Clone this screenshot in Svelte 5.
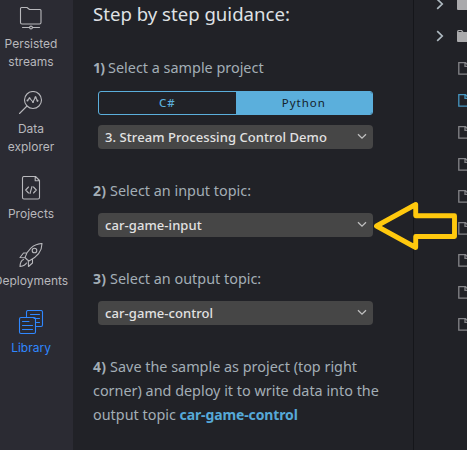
<script>
  const nav = [
    { icon: 'folder', lines: ['Persisted', 'streams'] },
    { icon: 'explore', lines: ['Data', 'explorer'] },
    { icon: 'code', lines: ['Projects'] },
    { icon: 'rocket', lines: ['Deployments'] },
    { icon: 'library', lines: ['Library'], active: true },
  ];
  const files = ['folder', 'folder', 'file', 'active', 'file', 'file', 'file', 'file', 'file', 'file', 'file'];
</script>

{#snippet select(value)}
  <div class="select">
    <span>{value}</span>
    <svg width="10" height="7" viewBox="0 0 10 7"><path d="M1 1.200 5 5.200 9 1.200" /></svg>
  </div>
{/snippet}

<div class="app">
  <nav>
    {#each nav as item}
      <div class="item" class:active={item.active}>
        <svg width="26" height="25" viewBox={item.icon === 'folder' ? '0 0 26 25' : item.icon === 'explore' ? '0 .5 26 25' : '0 1 26 25'}>
          {#if item.icon === 'folder'}
            <path d="M2.500 16.500V2.500q0-1 1-1H9l2.500 2H22q1 0 1 1v12q0 1.500-1.500 1.500H4q-1.500 0-1.500-1.500zM4.500 21.500h7M14.500 21.500h7" />
            <circle cx="13" cy="21.500" r="1.400" />
          {:else if item.icon === 'explore'}
            <circle cx="15" cy="9.500" r="8.500" /><path d="M9 15.500 1.500 23" />
            <path d="m9.500 10 2-2.500 3.500 4 2.500-5 2 4" /><path class="dots" d="M9.500 10h.01M11.500 7.700h.01M15 11.400h.01M17.500 6.700h.01M19.500 10.300h.01" />
          {:else if item.icon === 'code'}
            <path d="M17.500 1.500H6q-1.500 0-1.500 1.500v19.500q0 1.500 1.500 1.500h14q1.500 0 1.500-1.500V5.500zM17.200 1.700v4h4" />
            <path d="m10.500 12-2.800 3 2.800 3M15.500 12l2.800 3-2.800 3M14 11.500l-2 7" />
          {:else if item.icon === 'rocket'}
            <path d="M9 17.500c-1-1-2-2-2-2C9 8.500 15 2 24 1.500c0 8-6 14-13 17.500zM8.500 11H5.500L2 15.500l5 .2M14.500 17v4L10.500 24.500l-.2-5.500M5.500 17.500c-2 .8-3.300 3.500-3.500 7 3-.5 5.500-1.500 6.500-3.500" />
            <circle cx="16.500" cy="8.500" r="2.300" />
          {:else}
            <path d="M8.500 8V3q0-1.500 1.500-1.500h13Q24.500 1.500 24.500 3v13q0 1.500-1.500 1.500h-5.500M12.500 5.500h9M16 9.500h5.500M18.500 13.500h3" />
            <rect x="1.500" y="8.500" width="16" height="16" rx="1.500" /><path d="M4.500 12.500H11M4.500 16.500H14.500M4.500 20.500H14.500" />
          {/if}
        </svg>
        <div class="label">{#each item.lines as line}<span>{line}</span>{/each}</div>
      </div>
    {/each}
  </nav>

  <main>
    <h1>Step by step guidance:</h1>
    <section class="first">
      <p><b>1)</b> Select a sample project</p>
      <div class="tabs"><span class="cs">C#</span><span class="py">Python</span></div>
      {@render select('3. Stream Processing Control Demo')}
    </section>
    <section>
      <p><b>2)</b> Select an input topic:</p>
      {@render select('car-game-input')}
    </section>
    <section>
      <p><b>3)</b> Select an output topic:</p>
      {@render select('car-game-control')}
    </section>
    <p class="save"><b>4)</b> Save the sample as project (top right<br />corner) and deploy it to write data into the<br />output topic <strong>car-game-control</strong></p>
  </main>

  <aside>
    {#each files as kind}
      <div class="row" class:current={kind === 'active'}>
        {#if kind === 'folder'}
          <svg class="chevron" width="8" height="12" viewBox="0 0 8 12"><path d="M1.200 1.200 6.200 6 1.200 10.800" /></svg>
          <svg class="dir" width="14" height="12" viewBox="0 0 14 12"><path d="M0 2q0-2 1.500-2H5l1.500 2H14v10H1q-1 0-1-1z" /><path class="slot" d="M1.500 1.500H4.500" /></svg>
        {:else}
          <svg class="file" width="12" height="13" viewBox="0 0 12 13"><path d="M.800 .700h6.700l3.500 3.500v8H.800zM7 .800v3.500h4" /></svg>
        {/if}
      </div>
    {/each}
  </aside>

  <svg class="pointer" width="86" height="52" viewBox="0 0 86 52"><path d="M4.500 26 43.700 4.500v11.200H82.500v20.800H43.700V47.500z" /></svg>
</div>

<style>
  :global(body) { background: #212227; }
  .app { position: relative; display: flex; width: 467px; height: 450px; overflow: hidden; background: #212227; color: #a3aeb6; font-family: 'Noto Sans', sans-serif; }
  svg { flex: none; fill: none; stroke: currentColor; }
  nav { box-sizing: border-box; flex: 0 0 73px; padding-top: 6px; display: flex; flex-direction: column; gap: 20px; background: #2b2b33; color: #b8b8bc; }
  .item { width: 62px; display: flex; flex-direction: column; align-items: center; gap: 4px; }
  .item svg { stroke-width: 1.1; stroke-linejoin: round; stroke-linecap: round; }
  .item .dots { stroke-width: 2; }
  .label { display: flex; flex-direction: column; align-items: center; font: 12px/18px Inter, sans-serif; }
  .active { color: #2f87ff; }
  main { box-sizing: border-box; flex: 0 0 340px; padding: 0 0 0 20px; white-space: nowrap; }
  h1 { margin: 0; padding-top: 1px; height: 54px; box-sizing: border-box; font-size: 18.6px; line-height: 26px; font-weight: 400; color: #dfe1e4; }
  p { margin: 0; font-size: 14.4px; line-height: 24px; }
  b { font-size: 14px; font-weight: 700; letter-spacing: .3px; }
  section { height: 88px; }
  .first { height: 125px; padding-top: 2px; box-sizing: border-box; }
  section p { margin-bottom: 10px; }
  .first p { margin-bottom: 11px; }
  .first b { letter-spacing: -.7px; }
  .select { box-sizing: border-box; display: flex; align-items: center; justify-content: space-between; width: 275px; height: 24px; margin-left: 5px; padding: 0 6px 1px 7px; border-radius: 4px; background: #464646; color: #e2e2e2; font-size: 13px; font-weight: 500; letter-spacing: .07px; }
  .select svg { stroke: #c0c0c0; stroke-width: 1.3; }
  .tabs { box-sizing: border-box; display: flex; width: 275px; height: 24px; margin: 0 0 10px 5px; border: 1px solid #5bafdc; border-radius: 3px; overflow: hidden; font-size: 11.5px; line-height: 22px; letter-spacing: 1px; text-align: center; font-weight: 400; }
  .cs { flex: 1; color: #5bafdc; font-weight: 500; }
  .py { flex: 1; background: #5bafdc; color: #14222b; }
  strong { font-weight: 700; font-size: 14px; letter-spacing: -.12px; color: #56a9d8; }
  aside { box-sizing: border-box; flex: 1; border-left: 1px solid #15161a; margin-top: -12px; color: #858589; overflow: hidden; }
  .row { display: flex; align-items: center; height: 32px; padding-left: 44px; }
  .row:has(.chevron) { padding-left: 22px; gap: 13px; }
  .chevron { stroke: #aeb9c0; stroke-width: 1.7; }
  .dir { fill: #aaaaac; stroke: none; }
  .slot { stroke: #292a2e; stroke-width: 1; }
  .file { stroke-width: 1.3; margin-top: 1px; }
  .current { color: #4596c2; }
  .pointer { position: absolute; left: 372px; top: 200px; stroke: #ffc90e; stroke-width: 4.900; stroke-linejoin: round; }
</style>
